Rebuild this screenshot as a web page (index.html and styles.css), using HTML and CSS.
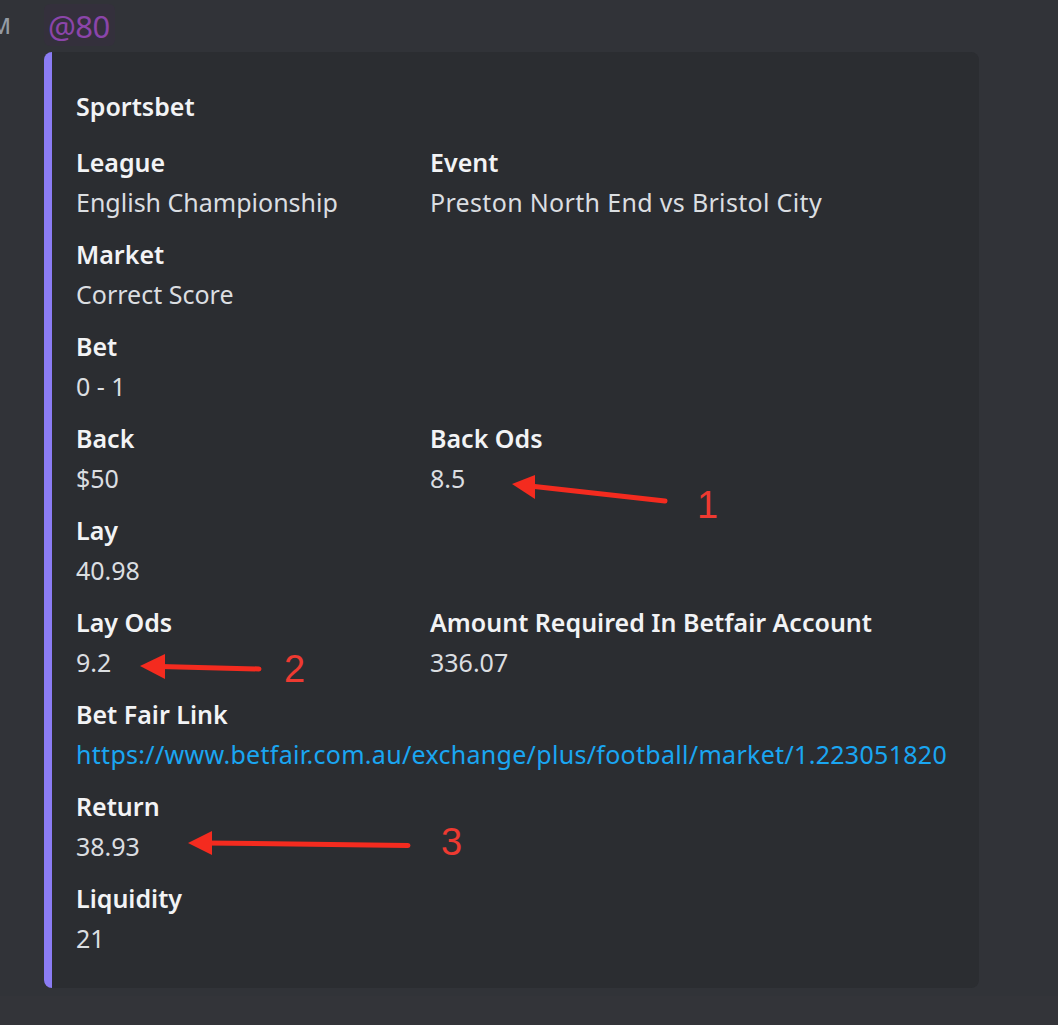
FILE: index.html
```html
<!DOCTYPE html>
<html>
<head>
<meta charset="utf-8">
<link rel="stylesheet" href="styles.css">
</head>
<body>
<div class="page">
  <div class="message">
    <div class="header">
      <div class="ts"><span>AM</span></div>
      <span class="mention">@80</span>
    </div>
    <div class="embed-row">
      <div class="embed">
        <div class="title">Sportsbet</div>
        <div class="fields">
          <div class="field"><div class="name">League</div><div class="value">English Championship</div></div>
          <div class="field"><div class="name">Event</div><div class="value wide">Preston North End vs Bristol City</div></div>
          <div class="field full"><div class="name">Market</div><div class="value">Correct Score</div></div>
          <div class="field full"><div class="name">Bet</div><div class="value">0 - 1</div></div>
          <div class="field"><div class="name">Back</div><div class="value">$50</div></div>
          <div class="field"><div class="name">Back Ods</div><div class="value">8.5</div></div>
          <div class="field full"><div class="name">Lay</div><div class="value">40.98</div></div>
          <div class="field"><div class="name">Lay Ods</div><div class="value">9.2</div></div>
          <div class="field"><div class="name">Amount Required In Betfair Account</div><div class="value">336.07</div></div>
          <div class="field full"><div class="name">Bet Fair Link</div><div class="value"><a class="link" href="#">https://www.betfair.com.au/exchange/plus/football/market/1.223051820</a></div></div>
          <div class="field full"><div class="name">Return</div><div class="value">38.93</div></div>
          <div class="field full"><div class="name">Liquidity</div><div class="value">21</div></div>
        </div>
      </div>
    </div>
  </div>
  <div class="bottom"></div>
  <svg class="annotations" width="1058" height="1025" viewBox="0 0 1058 1025">
    <g fill="#f42b1f" stroke="#f42b1f" stroke-linecap="round">
      <line x1="530" y1="486" x2="665" y2="501" stroke-width="5"/>
      <polygon points="512,484 535,475 535,499" stroke="none"/>
      <line x1="160" y1="666.5" x2="259" y2="669" stroke-width="5"/>
      <polygon points="140,666 165,654 165,679" stroke="none"/>
      <line x1="206" y1="843" x2="408" y2="845.5" stroke-width="5"/>
      <polygon points="188,843 212,831 212,855" stroke="none"/>
    </g>
    <g class="num" fill="#ee3a31">
      <text x="697" y="518">1</text>
      <text x="284" y="682">2</text>
      <text x="441" y="855">3</text>
    </g>
  </svg>
</div>
</body>
</html>
```

FILE: styles.css
```css
html, body {
  margin: 0;
  padding: 0;
  background: #313338;
}
body {
  font-family: "Noto Sans", "Open Sans", sans-serif;
  width: 1058px;
  height: 1025px;
  overflow: hidden;
}
.page {
  position: relative;
  width: 1058px;
  height: 1025px;
  display: flex;
  flex-direction: column;
}
.message {
  display: flex;
  flex-direction: column;
}
.header {
  display: flex;
  align-items: center;
  padding-top: 4px;
  height: 42px;
}
.ts {
  width: 44px;
  display: flex;
  justify-content: flex-end;
  padding-right: 33px;
  box-sizing: border-box;
  overflow: hidden;
  color: #949ba4;
  font-size: 22px;
  font-weight: 500;
}
.ts span {
  flex: none;
}
.mention {
  height: 42px;
  line-height: 44px;
  padding: 0 5px 0 4px;
  border-radius: 6px;
  background: #34303c;
  color: #8b45aa;
  font-size: 31px;
  font-weight: 400;
  letter-spacing: -0.5px;
}
.embed-row {
  display: flex;
  padding-left: 44px;
  margin-top: 6px;
}
.embed {
  width: 935px;
  box-sizing: border-box;
  background: #2b2d31;
  border-left: 8px solid #8b7cf4;
  border-radius: 8px;
  padding: 16px 32px 32px 24px;
}
.title {
  line-height: 44px;
  height: 44px;
  color: #f2f3f5;
  font-size: 25px;
  font-weight: 600;
  margin-top: 16px;
  margin-bottom: 16px;
}
.fields {
  display: grid;
  grid-template-columns: 354px 1fr;
  row-gap: 16px;
}
.field.full {
  grid-column: 1 / -1;
}
.name {
  line-height: 36px;
  height: 36px;
  color: #f2f3f5;
  font-size: 25px;
  font-weight: 600;
  margin-bottom: 4px;
  white-space: nowrap;
}
.value {
  line-height: 36px;
  height: 36px;
  color: #dbdee1;
  font-size: 25px;
  font-weight: 400;
  white-space: nowrap;
}
.value.wide {
  letter-spacing: 0.33px;
}
.link {
  color: #1aa6f2;
  text-decoration: none;
  letter-spacing: 0.3px;
}
.bottom {
  margin-top: 8px;
  flex: 1;
  background: #333439;
}
.annotations {
  position: absolute;
  left: 0;
  top: 0;
}
.num text {
  font-family: "Liberation Sans", Arial, sans-serif;
  font-size: 38px;
}
```
